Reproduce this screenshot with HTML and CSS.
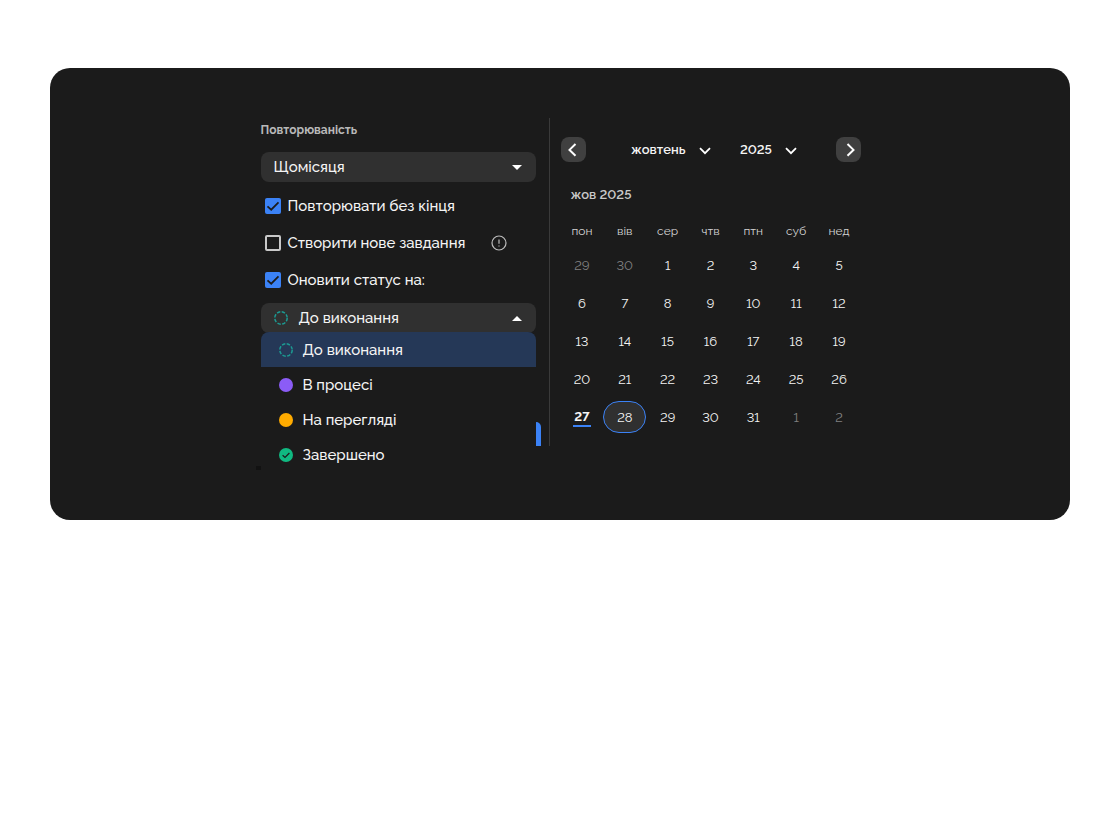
FILE: index.html
```html
<!DOCTYPE html>
<html lang="uk">
<head>
<meta charset="utf-8">
<meta name="viewport" content="width=device-width, initial-scale=1">
<title>Повторюваність</title>
<link rel="stylesheet" href="styles.css">
</head>
<body>
<main class="panel">
  <form class="repeat">
    <label class="repeat-title" for="frequency">Повторюваність</label>
    <div class="field">
      <select class="box" id="frequency"><option>Щомісяця</option></select>
      <svg class="caret" viewBox="0 0 10 5" aria-hidden="true"><path d="M0 0h10L5 5z"/></svg>
    </div>
    <div class="checks">
      <div class="check"><input type="checkbox" id="endless" checked><label for="endless">Повторювати без кінця</label></div>
      <div class="check"><input type="checkbox" id="create"><label for="create">Створити нове завдання</label>
        <svg class="info" viewBox="0 0 16 16" role="img" aria-label="Інформація"><circle cx="8" cy="8" r="7"/><path d="M8 4.5v4.3M8 10.4v1.2"/></svg>
      </div>
      <div class="check"><input type="checkbox" id="update" checked><label for="update">Оновити статус на:</label></div>
    </div>
    <div class="field">
      <button class="box status" type="button" aria-haspopup="listbox" aria-expanded="true">
        <svg class="dot todo" viewBox="0 0 14 14" aria-hidden="true"><circle cx="7" cy="7" r="6.2"/></svg>До виконання
      </button>
      <svg class="caret" viewBox="0 0 10 5" aria-hidden="true"><path d="M0 5h10L5 0z"/></svg>
      <ul class="menu" role="listbox" aria-label="Статус">
        <li class="option selected" role="option" aria-selected="true"><svg class="dot todo" viewBox="0 0 14 14" aria-hidden="true"><circle cx="7" cy="7" r="6.2"/></svg>До виконання</li>
        <li class="option" role="option"><svg class="dot progress" viewBox="0 0 14 14" aria-hidden="true"><circle cx="7" cy="7" r="7"/></svg>В процесі</li>
        <li class="option" role="option"><svg class="dot review" viewBox="0 0 14 14" aria-hidden="true"><circle cx="7" cy="7" r="7"/></svg>На перегляді</li>
        <li class="option" role="option"><svg class="dot done" viewBox="0 0 14 14" aria-hidden="true"><circle cx="7" cy="7" r="7"/><path d="M3.6 7.2 6 9.4 10.4 5"/></svg>Завершено</li>
      </ul>
    </div>
    <span class="edge"></span>
    <span class="shade"></span>
  </form>
  <section class="calendar">
    <div class="nav">
      <button class="step" type="button" aria-label="Попередній місяць"><svg viewBox="0 0 25 25"><path d="M14.5 7 8.5 12.9l6 5.9"/></svg></button>
      <div class="period">
        <div class="pick month"><select aria-label="Місяць"><option>жовтень</option></select><svg viewBox="0 0 12 8" aria-hidden="true"><path d="M1 1.2 6 6.2l5-5"/></svg></div>
        <div class="pick year"><select aria-label="Рік"><option>2025</option></select><svg viewBox="0 0 12 8" aria-hidden="true"><path d="M1 1.2 6 6.2l5-5"/></svg></div>
      </div>
      <button class="step" type="button" aria-label="Наступний місяць"><svg viewBox="0 0 25 25"><path d="M11.5 7l6 5.9-6 5.9"/></svg></button>
    </div>
    <h2 class="heading">жов 2025</h2>
    <table class="days">
      <thead><tr><th>пон</th><th>вів</th><th>сер</th><th>чтв</th><th>птн</th><th>суб</th><th>нед</th></tr></thead>
      <tbody>
        <tr><td><button class="day out" type="button">29</button></td><td><button class="day out" type="button">30</button></td><td><button class="day" type="button">1</button></td><td><button class="day" type="button">2</button></td><td><button class="day" type="button">3</button></td><td><button class="day" type="button">4</button></td><td><button class="day" type="button">5</button></td></tr>
        <tr><td><button class="day" type="button">6</button></td><td><button class="day" type="button">7</button></td><td><button class="day" type="button">8</button></td><td><button class="day" type="button">9</button></td><td><button class="day" type="button">10</button></td><td><button class="day" type="button">11</button></td><td><button class="day" type="button">12</button></td></tr>
        <tr><td><button class="day" type="button">13</button></td><td><button class="day" type="button">14</button></td><td><button class="day" type="button">15</button></td><td><button class="day" type="button">16</button></td><td><button class="day" type="button">17</button></td><td><button class="day" type="button">18</button></td><td><button class="day" type="button">19</button></td></tr>
        <tr><td><button class="day" type="button">20</button></td><td><button class="day" type="button">21</button></td><td><button class="day" type="button">22</button></td><td><button class="day" type="button">23</button></td><td><button class="day" type="button">24</button></td><td><button class="day" type="button">25</button></td><td><button class="day" type="button">26</button></td></tr>
        <tr><td><button class="day today" type="button"><span>27</span></button></td><td><button class="day chosen" type="button">28</button></td><td><button class="day" type="button">29</button></td><td><button class="day" type="button">30</button></td><td><button class="day" type="button">31</button></td><td><button class="day out" type="button">1</button></td><td><button class="day out" type="button">2</button></td></tr>
      </tbody>
    </table>
  </section>
</main>
</body>
</html>
```
FILE: styles.css
```css
* { box-sizing: border-box; }

body {
  margin: 0;
  padding: 68px 48px 68px 50px;
  background: #fff;
  color: #f4f4f4;
  font-family: Raleway, "Open Sans", "Noto Sans", sans-serif;
  font-size: 15px;
  font-weight: 500;
  font-variant-numeric: lining-nums;
}

button, select { font: inherit; font-variant-numeric: lining-nums; color: inherit; border: 0; margin: 0; }
select { appearance: none; }

.panel {
  display: flex;
  flex-wrap: wrap;
  justify-content: center;
  padding: 50px 20px 74px 21px;
  border-radius: 20px;
  background: #1b1b1b;
}

.repeat {
  position: relative;
  flex: 0 1 289px;
  min-height: 328px;
  padding-right: 13px;
  border-right: 1px solid #3a3a3a;
}

.repeat-title {
  display: block;
  margin-bottom: 10px;
  font-size: 12px;
  line-height: 24px;
  font-weight: 700;
  color: #b8b8b8;
}

.field { position: relative; }

.box {
  display: flex;
  align-items: center;
  width: 100%;
  height: 30px;
  padding: 0 13px;
  border-radius: 8px;
  background: #303030;
}

.status { gap: 11px; }

.caret {
  position: absolute;
  top: 13px;
  right: 14px;
  width: 10px;
  height: 5px;
  fill: #fff;
  pointer-events: none;
}

.checks { padding: 5px 3px 5px 4px; }
.check { display: flex; align-items: center; gap: 7px; height: 37px; }
.check input {
  appearance: none;
  flex: none;
  width: 16px;
  height: 16px;
  margin: 0;
  border: 2px solid #c9c9c9;
  border-radius: 2px;
}
.check input:checked {
  border: 0;
  background: #3b82f6 url("data:image/svg+xml,%3Csvg xmlns='http://www.w3.org/2000/svg' viewBox='0 0 16 16'%3E%3Cpath d='M2.5 8.3 6.2 11.7 13.5 4.3' fill='none' stroke='%231b1b1b' stroke-width='1.7'/%3E%3C/svg%3E") center / 16px 16px;
}

.info {
  width: 16px;
  height: 16px;
  margin-left: auto;
  margin-right: 26px;
  fill: none;
  stroke: #bdbdbd;
  stroke-width: 1.2;
}

.dot { flex: none; width: 14px; height: 14px; }
.todo { fill: none; stroke: #1c9a92; stroke-width: 1.5; stroke-dasharray: 3.4 1.47; }
.progress { fill: #8b5cf6; }
.review { fill: #ffab00; }
.done { fill: #10b981; }
.done path { fill: none; stroke: #1b1b1b; stroke-width: 1.2; }

.menu {
  position: absolute;
  z-index: 1;
  top: 29px;
  left: 0;
  right: 0;
  margin: 0;
  padding: 0;
  list-style: none;
  border-radius: 8px 8px 0 0;
  background: #1b1b1b;
}
.option { display: flex; align-items: center; gap: 10px; height: 35px; padding: 0 18px; }
.selected { border-radius: 8px 8px 0 0; background: #253857; }

/* Visible sliver of the button that the open menu covers */
.edge {
  position: absolute;
  right: 8px;
  bottom: 0;
  width: 5px;
  height: 24px;
  border-radius: 0 5px 0 0;
  background: #3b82f6;
}
.shade {
  position: absolute;
  left: -5px;
  bottom: -24px;
  width: 7px;
  height: 4px;
  background: #121212;
}

.calendar { flex: 0 1 311px; padding: 19px 0 0 11px; }
.nav { display: flex; justify-content: space-between; align-items: center; }
.step { width: 25px; height: 25px; padding: 0; border-radius: 8px; background: #404040; }
.step svg { display: block; fill: none; stroke: #fff; stroke-width: 2; }
.period { display: flex; gap: 29px; padding-left: 7px; font-size: 13px; font-weight: 600; }
.pick { position: relative; display: flex; align-items: center; }
.pick select { height: 24px; padding: 0; background: transparent; }
.month select { width: 80px; }
.year select { width: 57px; }
.pick svg {
  position: absolute;
  right: 0;
  top: 9px;
  width: 12px;
  height: 8px;
  fill: none;
  stroke: #fff;
  stroke-width: 1.8;
  pointer-events: none;
}

.heading {
  margin: 21px 0 12px;
  padding-left: 10px;
  font-size: 13px;
  line-height: 24px;
  font-weight: 600;
  color: #c9c9c9;
}

.days { width: 100%; table-layout: fixed; border-collapse: collapse; font-size: 13px; font-weight: 400; }
.days th { height: 27px; padding: 5px 0 0; vertical-align: top; font-size: 12px; font-weight: 400; color: #d4d4d4; }
.days td { height: 38px; padding: 0; }
.day {
  display: block;
  width: 100%;
  height: 32px;
  padding: 0;
  border-radius: 16px;
  background: transparent;
}
.out { color: #808080; }
.today { font-weight: 700; }
.today span { display: inline-block; padding: 0 1px; line-height: 17px; border-bottom: 2px solid #3b82f6; }
.chosen { border: 1px solid #3b82f6; background: #303030; }
```
